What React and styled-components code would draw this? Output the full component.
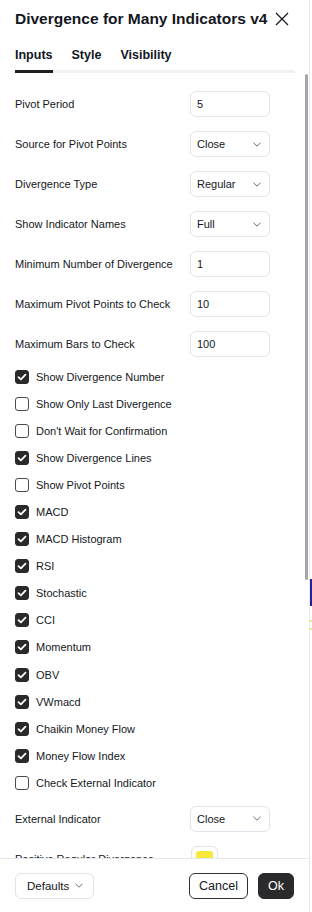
import styled, { createGlobalStyle } from "styled-components";

const GlobalStyle = createGlobalStyle`
  html, body {
    margin: 0;
    padding: 0;
    background: #ffffff;
  }
  * {
    box-sizing: border-box;
  }
`;

const FONT = `"Liberation Sans", Arial, sans-serif`;
const TEXT = "#131722";

const Page = styled.div`
  display: flex;
  width: 312px;
  height: 912px;
  overflow: hidden;
  font-family: ${FONT};
  color: ${TEXT};
`;

const Dialog = styled.div`
  width: 310px;
  height: 912px;
  flex: none;
  display: flex;
  flex-direction: column;
  background: #ffffff;
  border-right: 1px solid #e9e9ec;
`;

const ChartStrip = styled.div`
  flex: 1;
  display: flex;
  flex-direction: column;
  background: #ffffff;
`;

const ChartBand = styled.div`
  height: ${(p) => p.$h}px;
  background: ${(p) => p.$bg || "transparent"};
  flex: none;
`;

const Header = styled.div`
  height: 38px;
  display: flex;
  align-items: center;
  justify-content: space-between;
  padding: 0 20px 0 15px;
`;

const Title = styled.div`
  font-size: 15.5px;
  font-weight: 700;
  white-space: nowrap;
`;

const CloseButton = styled.button`
  border: 0;
  background: none;
  padding: 0;
  width: 14px;
  height: 14px;
  display: flex;
  color: ${TEXT};
`;

const Tabs = styled.div`
  display: flex;
  gap: 19px;
  margin: 0 14px 0 15px;
  padding-top: 8px;
  box-shadow: inset 0 -3px 0 #f0f1f3;
`;

const Tab = styled.div`
  font-size: 12.5px;
  font-weight: 700;
  line-height: 18px;
  padding-bottom: 6px;
  border-bottom: 3px solid ${(p) => (p.$active ? "#1e1f23" : "transparent")};
  color: ${TEXT};
`;

const Body = styled.div`
  position: relative;
  flex: 1;
  overflow: hidden;
  padding: 18px 39px 0 15px;
`;

const ScrollThumb = styled.div`
  position: absolute;
  right: 1px;
  top: 1px;
  width: 3px;
  height: 506px;
  border-radius: 2px;
  background: #a4a6ad;
`;

const FieldRow = styled.div`
  display: flex;
  align-items: center;
  justify-content: space-between;
  height: 26px;
  margin-bottom: 14px;
`;

const Label = styled.div`
  font-size: 11px;
  white-space: nowrap;
`;

const Control = styled.div`
  width: 80px;
  height: 26px;
  flex: none;
  display: flex;
  align-items: center;
  justify-content: space-between;
  padding: 0 8px 0 6px;
  border: 1px solid #e0e3eb;
  border-radius: 6px;
  font-size: 11px;
  background: #ffffff;
`;

const Swatch = styled.div`
  width: 27px;
  height: 26px;
  flex: none;
  margin-right: 52px;
  padding: 4px;
  border: 1px solid #e0e3eb;
  border-radius: 6px;
`;

const SwatchColor = styled.div`
  width: 100%;
  height: 100%;
  border-radius: 3px;
  background: ${(p) => p.$color};
`;

const Checks = styled.div`
  margin: -8px 0 9px;
`;

const CheckRow = styled.label`
  display: flex;
  align-items: center;
  gap: 7px;
  height: 27.1px;
  font-size: 11px;
`;

const Box = styled.span`
  width: 14px;
  height: 14px;
  flex: none;
  display: flex;
  align-items: center;
  justify-content: center;
  border-radius: 3px;
  background: ${(p) => (p.$checked ? "#2a2a2d" : "#ffffff")};
  border: 1px solid ${(p) => (p.$checked ? "#2a2a2d" : "#4a4b50")};
`;

const Footer = styled.div`
  height: 54px;
  flex: none;
  display: flex;
  align-items: center;
  gap: 10px;
  padding: 0 15px;
  border-top: 1px solid #e6e7ea;
`;

const DefaultsButton = styled.button`
  width: 79px;
  height: 26px;
  display: flex;
  align-items: center;
  justify-content: space-between;
  padding: 0 10px 0 11px;
  border: 1px solid #e0e3eb;
  border-radius: 6px;
  background: #ffffff;
  font-family: ${FONT};
  font-size: 11.5px;
  color: ${TEXT};
  margin-right: auto;
`;

const Button = styled.button`
  height: 26px;
  padding: 0 9px;
  border-radius: 6px;
  border: 1px solid ${(p) => (p.$primary ? "#2a2a2d" : "#2f3034")};
  background: ${(p) => (p.$primary ? "#2a2a2d" : "#ffffff")};
  color: ${(p) => (p.$primary ? "#ffffff" : TEXT)};
  font-family: ${FONT};
  font-size: 12.5px;
`;

const Chevron = () => (
  <svg width="8" height="5" viewBox="0 0 8 5" fill="none">
    <path d="M0.5 0.8 L4 4.2 L7.5 0.8" stroke="#6b6e78" strokeWidth="1" />
  </svg>
);

const Check = () => (
  <svg width="10" height="8" viewBox="0 0 10 8" fill="none">
    <path d="M1.5 4.2 L3.9 6.4 L8.5 1.6" stroke="#ffffff" strokeWidth="1.8" strokeLinecap="round" strokeLinejoin="round" />
  </svg>
);

const fieldsTop = [
  { label: "Pivot Period", value: "5" },
  { label: "Source for Pivot Points", value: "Close", select: true },
  { label: "Divergence Type", value: "Regular", select: true },
  { label: "Show Indicator Names", value: "Full", select: true },
  { label: "Minimum Number of Divergence", value: "1" },
  { label: "Maximum Pivot Points to Check", value: "10" },
  { label: "Maximum Bars to Check", value: "100" },
];

const checks = [
  ["Show Divergence Number", true],
  ["Show Only Last Divergence", false],
  ["Don't Wait for Confirmation", false],
  ["Show Divergence Lines", true],
  ["Show Pivot Points", false],
  ["MACD", true],
  ["MACD Histogram", true],
  ["RSI", true],
  ["Stochastic", true],
  ["CCI", true],
  ["Momentum", true],
  ["OBV", true],
  ["VWmacd", true],
  ["Chaikin Money Flow", true],
  ["Money Flow Index", true],
  ["Check External Indicator", false],
];

const Field = ({ label, value, select }) => (
  <FieldRow>
    <Label>{label}</Label>
    <Control>
      <span>{value}</span>
      {select && <Chevron />}
    </Control>
  </FieldRow>
);

export default function App() {
  return (
    <>
      <GlobalStyle />
      <Page>
        <Dialog>
          <Header>
            <Title>Divergence for Many Indicators v4</Title>
            <CloseButton aria-label="Close">
              <svg width="14" height="14" viewBox="0 0 14 14" fill="none">
                <path d="M1 1 L13 13 M13 1 L1 13" stroke="currentColor" strokeWidth="1.2" />
              </svg>
            </CloseButton>
          </Header>
          <Tabs>
            <Tab $active>Inputs</Tab>
            <Tab>Style</Tab>
            <Tab>Visibility</Tab>
          </Tabs>
          <Body>
            {fieldsTop.map((f) => (
              <Field key={f.label} {...f} />
            ))}
            <Checks>
              {checks.map(([label, on]) => (
                <CheckRow key={label}>
                  <Box $checked={on}>{on && <Check />}</Box>
                  {label}
                </CheckRow>
              ))}
            </Checks>
            <Field label="External Indicator" value="Close" select />
            <FieldRow>
              <Label>Positive Regular Divergence</Label>
              <Swatch>
                <SwatchColor $color="#f7e83b" />
              </Swatch>
            </FieldRow>
            <ScrollThumb />
          </Body>
          <Footer>
            <DefaultsButton>
              <span>Defaults</span>
              <Chevron />
            </DefaultsButton>
            <Button>Cancel</Button>
            <Button $primary>Ok</Button>
          </Footer>
        </Dialog>
        <ChartStrip>
          <ChartBand $h={579} />
          <ChartBand $h={27} $bg="#26239a" />
          <ChartBand $h={14} />
          <ChartBand $h={2} $bg="#e8e48a" />
          <ChartBand $h={6} />
          <ChartBand $h={2} $bg="#e8e48a" />
        </ChartStrip>
      </Page>
    </>
  );
}
